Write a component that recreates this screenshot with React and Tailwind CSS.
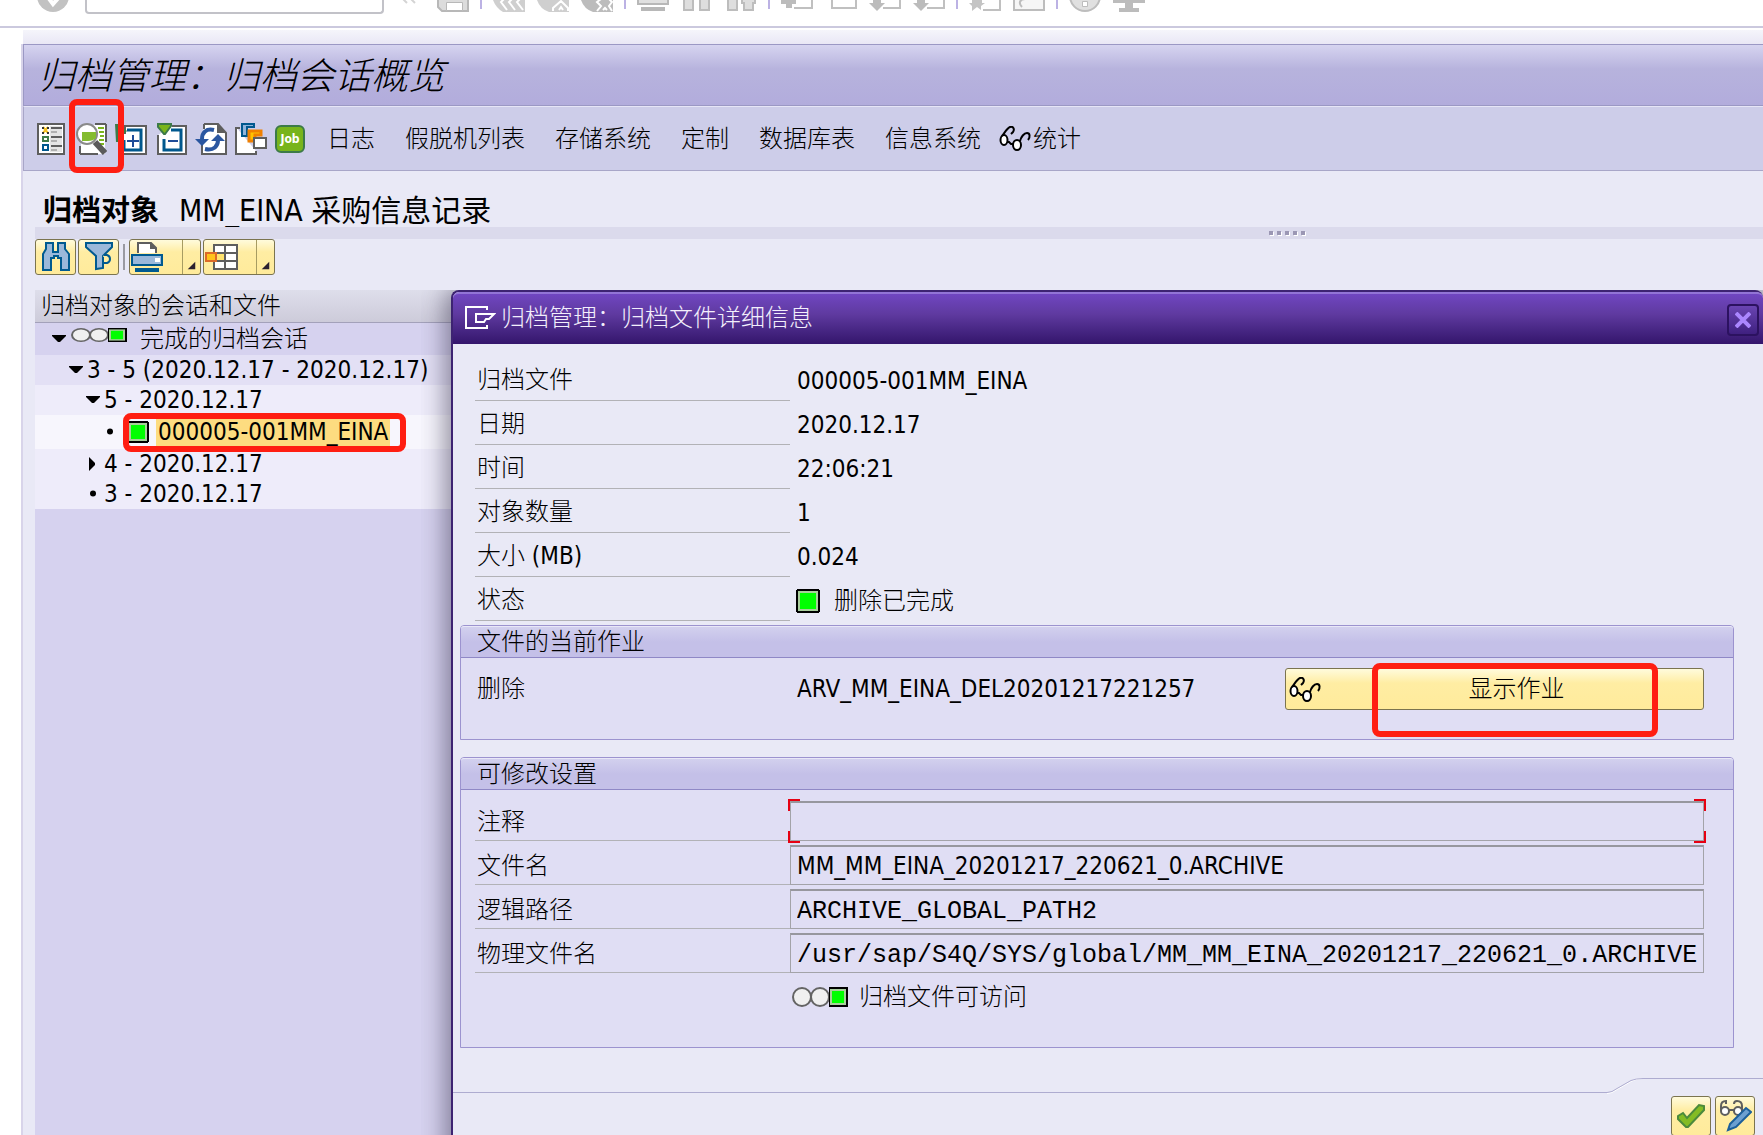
import React from 'react';
import clsx from 'clsx';

const YELLOW =
  'border border-[#7b744f] rounded-[3px] bg-linear-to-b from-[#fffbdc] via-[#ffeda3] via-35% to-[#ffeb9b]';

/* ---------- status lights ---------- */

const GreenSquare = ({ className }) => (
  <svg viewBox="0 0 24 24" className={clsx('shrink-0', className)} shapeRendering="crispEdges">
    <path fill="#000" d="M1 0h22v1h1v22h-1v1H1v-1H0V1h1z" />
    <path fill="#a9cf9c" d="M2 2h20v20H2z" />
    <path fill="#00ff00" d="M4 4h16v16H4z" />
  </svg>
);

const TrafficLight = ({ className }) => (
  <svg viewBox="0 0 56 20" preserveAspectRatio="none" className={clsx('shrink-0', className)}>
    <ellipse cx="10" cy="10" rx="9" ry="9" fill="#f0f0f0" stroke="#646464" strokeWidth="2" />
    <ellipse cx="28" cy="10" rx="9" ry="9" fill="#f0f0f0" stroke="#646464" strokeWidth="2" />
    <path fill="#000" d="M37 0h19v20H37z" />
    <path fill="#a9cf9c" d="M38 2h16v16H38z" />
    <path fill="#00ff00" d="M40 4h12v12H40z" />
  </svg>
);

const Glasses = () => (
  <svg viewBox="0 0 32 26" className="w-8 h-[26px] shrink-0" fill="none" stroke="#000" strokeWidth="2">
    <ellipse cx="5" cy="14" rx="3.5" ry="5" fill="#fff" />
    <ellipse cx="18" cy="19" rx="4" ry="5" fill="#fff" />
    <path d="M8 16h2l2 2h2" />
    <path d="M3 10C5 8 8 2 11 1c3-1 5 2 3 5l-2 2" />
    <path d="M21 15c1-4 4-8 7-8 3 0 3.500 4 1 7" />
  </svg>
);

/* ---------- system bar, only the lower part of each icon is on screen ---------- */

const SYS_ICONS = {
  save: (
    <>
      <path fill="#dcdcdc" stroke="#b8b8b8" strokeWidth="2" d="M1-2v9l4 4h26V-2" />
      <path fill="#fff" stroke="#b8b8b8" d="M9.500 2.500h16v8h-16z" />
    </>
  ),
  back: (
    <>
      <path fill="#cfcfcf" d="M0 0h32v12H10Q3 8 0 0z" />
      <path fill="none" stroke="#fff" strokeWidth="2" d="M12-2l-4 4 6 8M20-2l-4 4 6 8M28-2l-4 4 6 8" />
    </>
  ),
  exit: (
    <>
      <path fill="#cfcfcf" d="M0 0h32v12H12Q3 9 0 0z" />
      <path fill="none" stroke="#fff" strokeWidth="2" d="M16 11v-3l8-7 7 7v3M22 10l2-3 2 3" />
    </>
  ),
  cancel: (
    <>
      <path fill="#bcbcbc" d="M0 0h32v12H12Q3 9 0 0z" />
      <path fill="none" stroke="#fff" strokeWidth="2" d="M16 11l4-5-4-4 4-3M31 11l-3-5 3-4-3-3M22 10l2-2 2 2" />
    </>
  ),
  print: (
    <>
      <path fill="#e0e0e0" stroke="#b8b8b8" strokeWidth="2" d="M1-2v6h30v-6" />
      <path fill="#b8b8b8" d="M4 7h24v4H4z" />
    </>
  ),
  find: <path fill="#dedede" stroke="#bdbdbd" strokeWidth="2" d="M3-2h9v12H3zM19-2h9v12h-9z" />,
  findNext: (
    <path fill="#dedede" stroke="#bdbdbd" strokeWidth="2" d="M3-2h9v12H3zM19 3h-2v-5h13v5h-2v7h-9z" />
  ),
  first: (
    <>
      <path fill="none" stroke="#c0c0c0" strokeWidth="2" d="M13 8h18V-2" />
      <path fill="#bcbcbc" d="M0 0h15v4h-4v4H5V4H0z" />
    </>
  ),
  prev: <path fill="none" stroke="#c0c0c0" strokeWidth="2" d="M7-2v10h24V-2" />,
  next: (
    <>
      <path fill="none" stroke="#c0c0c0" strokeWidth="2" d="M14 8h17V-2" />
      <path fill="#bcbcbc" d="M4 0h8v3h4L8 11 0 3h4z" />
    </>
  ),
  session: (
    <>
      <path fill="none" stroke="#c0c0c0" strokeWidth="2" d="M14 10h17V-2" />
      <path fill="#c4c4c4" d="M3 0h10v3h3l-4 3v4L8 7l-5 4V6L0 3h3z" />
    </>
  ),
  shortcut: (
    <>
      <path fill="#f6f6f6" stroke="#bdbdbd" strokeWidth="2" d="M1-2v12h30V-2" />
      <path fill="none" stroke="#bdbdbd" strokeWidth="2" d="M9 7c-4-4-2-8 3-8" />
    </>
  ),
  help: (
    <>
      <circle cx="16" cy="-4" r="15" fill="#e0e0e0" stroke="#bdbdbd" strokeWidth="2" />
      <path fill="#fff" stroke="#bdbdbd" d="M13.500 1.500h5v5h-5z" />
    </>
  ),
  layout: <path fill="#bcbcbc" d="M0 0h32v3H20v5h6v4H6V8h6V3H0z" />,
};

const SYS_GROUPS = [
  [['save', '保存']],
  [['back', '返回'], ['exit', '退出'], ['cancel', '取消']],
  [['print', '打印'], ['find', '查找'], ['findNext', '查找下一个']],
  [['first', '第一页'], ['prev', '上一页'], ['next', '下一页'], ['next', '最后一页']],
  [['session', '新建会话'], ['shortcut', '创建快捷方式']],
  [['help', '帮助'], ['layout', '自定义布局']],
];

const SystemBar = () => (
  <div className="h-7 shrink-0 flex items-start bg-white border-b-2 border-[#cbc9de]">
    <button className="ml-[37px] w-8 h-3" title="回车" disabled>
      <svg viewBox="0 0 32 12" className="w-8 h-3">
        <circle cx="16" cy="-4" r="16" fill="#c2c2c2" />
        <path d="M10-4l6 8 8-9" fill="none" stroke="#fff" strokeWidth="4" />
      </svg>
    </button>
    <input
      aria-label="命令"
      className="ml-4 w-[299px] h-[14px] bg-white border-2 border-t-0 border-[#c2c2c8] rounded-b-sm outline-none"
    />
    <svg viewBox="0 0 16 4" className="ml-[18px] mr-[19px] w-4 h-1" stroke="#d4d4d4" strokeWidth="2">
      <path d="M1-1l4 4M9-1l4 4" />
    </svg>
    <div className="flex gap-3">
      {SYS_GROUPS.map((group, i) => (
        <React.Fragment key={i}>
          {i > 0 && <span className="w-0.5 h-[9px] -mx-px bg-[#bcb2e4]" />}
          {group.map(([icon, title], j) => (
            <button key={j} title={title} className="w-8 h-3" disabled>
              <svg viewBox="0 0 32 12" className="w-8 h-3">
                {SYS_ICONS[icon]}
              </svg>
            </button>
          ))}
        </React.Fragment>
      ))}
    </div>
  </div>
);

/* ---------- application toolbar ---------- */

const APP_ICONS = [
  {
    title: '选择',
    art: (
      <>
        <path fill="#fff" stroke="#5e5e5e" strokeWidth="2" d="M3 1h26v30H3z" />
        <path fill="#e4e4e4" d="M15 3h12v26H15z" />
        <path stroke="#5e5e5e" strokeWidth="2" d="M16 5h11M16 14h11M16 23h11" />
        <path stroke="#b0b0b0" strokeWidth="2" d="M16 9h6M16 18h6M16 27h6" />
        <path stroke="#f4c020" strokeWidth="2" d="M8 4l5 6M13 4l-5 6" />
        <path fill="#333" d="M7 4h2v2H7zM12 4h2v2h-2zM7 9h2v2H7zM12 9h2v2h-2z" />
        <path fill="none" stroke="#3c7a48" strokeWidth="2" d="M8 14h5v4H8z" />
        <path fill="none" stroke="#00588e" strokeWidth="2" d="M8 22h5v5H8z" />
      </>
    ),
  },
  {
    title: '显示细节',
    marked: true,
    art: (
      <>
        <path fill="#fff" d="M6 2h24v29H6z" />
        <path stroke="#5e5e5e" strokeWidth="2" d="M31 1v18M20 1h11M5 31h18M5 23v8" />
        <path stroke="#7ab51d" strokeWidth="2" d="M23 5h6M24 9h5M25 13h4M24 17h5M23 21h6" />
        <circle cx="12" cy="11" r="10" fill="#fff" stroke="#8a8a8a" strokeWidth="2" />
        <path fill="#84bc30" d="M7 9h14v6q-3 3-8 3H7z" />
        <path stroke="#5a5a5a" strokeWidth="6" d="M20 19l10 11" />
      </>
    ),
  },
  {
    title: '展开',
    art: (
      <>
        <path fill="#fff" stroke="#5e5e5e" strokeWidth="2" d="M31 3v28H4V10h6V3z" />
        <path fill="#3c7a48" d="M0 1h5l7 7-7 7v4H1z" />
        <path fill="none" stroke="#00588e" strokeWidth="3" d="M12 7h14v20H9V17" />
        <path stroke="#1e4c98" strokeWidth="2" d="M12 18h12M18 12v12" />
      </>
    ),
  },
  {
    title: '压缩',
    art: (
      <>
        <path fill="#fff" stroke="#5e5e5e" strokeWidth="2" d="M17 3h14v28H3V12" />
        <path fill="#7ab51d" stroke="#3c7a48" strokeWidth="2" d="M3 1h13v2l-6 8h-1L3 4z" />
        <path fill="none" stroke="#00588e" strokeWidth="3" d="M16 7h10v20H9V16" />
        <path stroke="#1e4c98" strokeWidth="2" d="M13 18h10" />
      </>
    ),
  },
  {
    title: '刷新',
    art: (
      <>
        <path fill="#fff" stroke="#5e5e5e" strokeWidth="2" d="M9 1h14l8 9v21H7V22M9 1v5" />
        <path fill="#5e5e5e" d="M22 1l9 9h-9z" />
        <path fill="none" stroke="#2a56a0" strokeWidth="4" d="M19 7c-8-2-12 3-12 9M10 26c9 2 13-3 13-9" />
        <path fill="#2a56a0" d="M0 16h14l-7 7zM16 18h14l-7-7z" />
      </>
    ),
  },
  {
    title: '存储对象',
    art: (
      <>
        <path fill="#fff" stroke="#5e5e5e" strokeWidth="2" d="M1 4v27h20v-3M1 5h4" />
        <path fill="#8fb4dc" stroke="#00588e" strokeWidth="2" d="M7 13V1h12v3h-7v9z" />
        <path fill="#ffc400" stroke="#f08000" strokeWidth="3" d="M14 18V8h12v4h-6v6z" />
        <path fill="#fff" stroke="#5e5e5e" strokeWidth="2" d="M19 15h12v10H19z" />
      </>
    ),
  },
];

const TEXT_ACTIONS = ['日志', '假脱机列表', '存储系统', '定制', '数据库表', '信息系统'];

const AppToolbar = () => (
  <div className="h-[65px] shrink-0 flex items-center pl-[11px] border-t border-b border-l border-t-[#e6e5f6] border-b-[#a8a6c8] border-l-[#a8a6c8] bg-[#cdcde9]">
    <div className="flex gap-2">
      {APP_ICONS.map(({ title, art, marked }) => (
        <button key={title} title={title} className="relative w-8 h-8">
          <svg viewBox="0 0 32 32" className="w-8 h-8" fill="none">
            {art}
          </svg>
          {marked && (
            <span className="absolute z-10 -left-[6px] -top-[24px] w-[55px] h-[74px] border-6 border-[#ff1e12] rounded-lg pointer-events-none" />
          )}
        </button>
      ))}
      <button
        title="作业"
        className="mt-0.5 w-[30px] h-7 rounded-md border-2 border-[#3c7a48] bg-[#78b41c] text-white text-[12px] leading-[22px] font-bold font-['DejaVu_Sans_Condensed',sans-serif]"
      >
        Job
      </button>
    </div>
    <div className="ml-[22px] flex gap-[30px] text-2xl">
      {TEXT_ACTIONS.map((label) => (
        <button key={label}>{label}</button>
      ))}
    </div>
    <button className="ml-[18px] flex items-center gap-0.5 text-2xl">
      <Glasses />
      统计
    </button>
  </div>
);

/* ---------- list toolbar + tree ---------- */

const DropCorner = () => (
  <svg viewBox="0 0 18 34" className="w-[18px] h-[34px] border-l border-[#a79c62]">
    <path d="M13 22v8H5z" fill="#2b2030" />
  </svg>
);

const ListToolbar = () => (
  <div className="h-9 shrink-0 flex items-center gap-0.5">
    <button title="查找" className={`${YELLOW} w-[41px] h-9 flex items-center justify-center`}>
      <svg viewBox="0 0 30 32" className="w-[30px] h-8" fill="#9ab8da" stroke="#005a90" strokeWidth="2">
        <path d="M2 13l3-5V2h7v9h5V2h7v6l4 5v16h-8V17h-3v-2h-4v2h-3v12H2z" />
      </svg>
    </button>
    <button title="过滤" className={`${YELLOW} w-[41px] h-9 flex items-center justify-center`}>
      <svg viewBox="0 0 30 32" className="w-[30px] h-8" fill="#9ab8da" stroke="#005a90" strokeWidth="2">
        <path d="M2 2h26v4l-9 9v12l-7 1V15L2 6z" />
        <path fill="#ffeda3" d="M19 16v6h4q3-1 3-4t-3-4h-3" />
      </svg>
    </button>
    <span className="mx-0.5 w-0.5 h-[26px] bg-[#9a9aa2]" />
    <button title="打印" className={`${YELLOW} w-[72px] h-9 flex items-center justify-between`}>
      <svg viewBox="0 0 34 32" className="w-[34px] h-8" strokeWidth="2">
        <path fill="#fff" stroke="#5e5e5e" d="M8 12V2h13l5 5v5" />
        <path fill="#5e5e5e" d="M20 1l7 7h-7z" />
        <path fill="#9ab8da" stroke="#005a90" d="M2 14h30v10H2z" />
        <path fill="#fff" d="M25 17h5v4h-5z" />
        <path fill="#005a90" d="M5 27h24v4H5z" />
      </svg>
      <DropCorner />
    </button>
    <button title="格式" className={`${YELLOW} w-[72px] h-9 flex items-center justify-between`}>
      <svg viewBox="0 0 34 32" className="w-[34px] h-8" strokeWidth="2">
        <path fill="#fff" stroke="#5e5e5e" d="M10 4h23v24H10zM10 12h23M10 20h23M21 4v24" />
        <path fill="#ffe36e" d="M12 13h8v6h-8z" />
        <path fill="#ffc21a" stroke="#dc6a28" d="M2 12h10v8H2z" />
      </svg>
      <DropCorner />
    </button>
  </div>
);

const Arrow = ({ kind }) => (
  <svg viewBox="0 0 14 14" className="w-[14px] h-[14px] shrink-0">
    {kind === 'open' && <path d="M0 3h14v1l-6 6H6L0 4z" />}
    {kind === 'closed' && <path d="M3 0l6 6v2l-6 6z" />}
    {kind === 'leaf' && <circle cx="7" cy="6.500" r="3" />}
  </svg>
);

const LATIN = "text-[24px] font-['DejaVu_Sans_Condensed','Noto_Sans_CJK_SC',sans-serif]";

const TREE_ROWS = [
  { kind: 'open', text: '3 - 5 (2020.12.17 - 2020.12.17)', row: 'h-[30px] pl-[34px] bg-[#e3e0f5]' },
  { kind: 'open', text: '5 - 2020.12.17', row: 'h-[30px] pl-[51px] bg-[#eeecfa]' },
  { kind: 'leaf', text: '000005-001MM_EINA', row: 'h-[34px] pl-[68px] bg-[#f7f6fd]', selected: true },
  { kind: 'closed', text: '4 - 2020.12.17', row: 'h-[30px] pl-[51px] bg-[#eeecfa]' },
  { kind: 'leaf', text: '3 - 2020.12.17', row: 'h-[30px] pl-[51px] bg-[#eeecfa]' },
];

const SessionTree = () => (
  <div className="mt-[15px] grow flex flex-col bg-[#d6d2ef]">
    <div className="h-[33px] shrink-0 flex items-center pl-[6px] text-2xl border-b border-[#a3a1ba] bg-linear-to-b from-[#dedeeb] to-[#cdcbda]">
      归档对象的会话和文件
    </div>
    <div className="h-[32px] shrink-0 flex items-center pl-[17px] text-2xl">
      <Arrow kind="open" />
      <TrafficLight className="ml-[5px] mr-[13px] mb-2 w-14 h-[14px]" />
      完成的归档会话
    </div>
    {TREE_ROWS.map(({ kind, text, row, selected }) => (
      <div key={text} className={clsx('shrink-0 flex items-center', LATIN, row)}>
        <Arrow kind={kind} />
        {selected ? (
          <div className="relative ml-[10px] flex items-center">
            <GreenSquare className="w-[22px] h-[22px]" />
            <span className="ml-[7px] pl-0.5 pr-0.5 leading-[30px] bg-[#fddc80]">{text}</span>
            <span className="absolute -left-[4px] -right-[16px] -top-[4px] -bottom-[5px] border-6 border-[#ff1e12] rounded-lg pointer-events-none" />
          </div>
        ) : (
          <span className="ml-1">{text}</span>
        )}
      </div>
    ))}
  </div>
);

/* ---------- detail dialog ---------- */

const DETAILS = [
  ['归档文件', '000005-001MM_EINA'],
  ['日期', '2020.12.17'],
  ['时间', '22:06:21'],
  ['对象数量', '1'],
  ['大小 (MB)', '0.024'],
];

const LABEL = 'w-[315px] shrink-0 pl-[2px] text-2xl border-b border-[#b2b2b6]';

const Group = ({ title, className, children }) => (
  <section className={clsx('ml-[7px] mr-[29px] border border-[#9c93cf] rounded-t-[4px] bg-[#e0def4]', className)}>
    <h2 className="h-8 pl-4 text-2xl leading-[30px] border-b border-[#8f88c6] border-t border-t-[#e9e7f8] rounded-t-[3px] bg-linear-to-b from-[#d2d0ee] via-[#c4c0e8] via-50% to-[#c4c0e8]">
      {title}
    </h2>
    {children}
  </section>
);

const FIELD =
  'w-full h-10 pl-[6px] bg-transparent border border-[#a3a3a8] border-t-2 border-t-[#97979e] outline-none';

const FIELDS = [
  { id: 'note', label: '注释', value: '', font: '', required: true },
  { id: 'file', label: '文件名', value: 'MM_MM_EINA_20201217_220621_0.ARCHIVE', font: LATIN },
  {
    id: 'logical',
    label: '逻辑路径',
    value: 'ARCHIVE_GLOBAL_PATH2',
    font: "pt-1 text-[25px] font-['Liberation_Mono',monospace]",
  },
  {
    id: 'physical',
    label: '物理文件名',
    value: '/usr/sap/S4Q/SYS/global/MM_MM_EINA_20201217_220621_0.ARCHIVE',
    font: "pt-1 text-[25px] font-['Liberation_Mono',monospace]",
  },
];

const RequiredCorners = () => (
  <>
    <span className="absolute -left-0.5 -top-0.5 w-3 h-3 border-l-2 border-t-2 border-[#e60012]" />
    <span className="absolute -right-0.5 -top-0.5 w-3 h-3 border-r-2 border-t-2 border-[#e60012]" />
    <span className="absolute -left-0.5 -bottom-0.5 w-3 h-3 border-l-2 border-b-2 border-[#e60012]" />
    <span className="absolute -right-0.5 -bottom-0.5 w-3 h-3 border-r-2 border-b-2 border-[#e60012]" />
  </>
);

const DetailDialog = () => (
  <div
    role="dialog"
    aria-labelledby="dialog-title"
    className="absolute z-20 left-[451px] right-0 top-[290px] min-h-full rounded-t-lg border-2 border-r-0 border-[#3d2372] bg-[#e9e9f6] shadow-[0_4px_24px_6px_rgba(60,55,80,0.55)] [clip-path:inset(0_0_0_-30px)]"
  >
    <div className="h-[52px] flex items-center pl-[11px] pr-1 rounded-t-md border-t-2 border-[#9274d6] bg-linear-to-b from-[#7046c1] via-[#5f3aa0] via-40% to-[#34156c]">
      <svg viewBox="0 0 32 26" className="w-8 h-[26px] mb-0.5" fill="none" stroke="#fff" strokeWidth="2">
        <path d="M23 5V2H2v21h21v-3" />
        <path d="M12 9h18l-5 5h-3l-2 3h-8z" />
      </svg>
      <h1 id="dialog-title" className="ml-[5px] mb-0.5 text-2xl text-[#f3effc]">
        归档管理：归档文件详细信息
      </h1>
      <button
        title="关闭"
        className="ml-auto mt-0.5 w-8 h-8 flex items-center justify-center rounded-sm border-2 border-[#2c1260] bg-linear-to-b from-[#6a44b2] to-[#3f2080]"
      >
        <svg viewBox="0 0 16 16" className="w-4 h-4" stroke="#ab87ff" strokeWidth="4">
          <path d="M1 1l14 14M15 1L1 15" />
        </svg>
      </button>
    </div>

    <div className="pt-[13px]">
      <dl>
        {DETAILS.map(([label, value]) => (
          <div key={label} className="h-11 pl-[22px] flex items-stretch">
            <dt className={clsx(LABEL, 'leading-[46px]')}>{label}</dt>
            <dd className={clsx('ml-[7px] leading-[48px]', LATIN)}>{value}</dd>
          </div>
        ))}
        <div className="h-11 pl-[22px] flex items-stretch">
          <dt className={clsx(LABEL, 'leading-[46px]')}>状态</dt>
          <dd className="ml-[6px] pt-1 flex items-center gap-[14px] text-2xl">
            <GreenSquare className="w-6 h-6" />
            删除已完成
          </dd>
        </div>
      </dl>

      <Group title="文件的当前作业" className="mt-1 h-[115px]">
        <div className="pt-[10px] pl-4 pr-[29px] flex items-center">
          <span className="w-[320px] shrink-0 text-2xl">删除</span>
          <span className={LATIN}>ARV_MM_EINA_DEL20201217221257</span>
          <button
            className={`${YELLOW} relative ml-auto w-[419px] h-[42px] flex items-center justify-center text-2xl`}
          >
            <span className="absolute left-[3px] top-2">
              <Glasses />
            </span>
            <span className="ml-11">显示作业</span>
            <span className="absolute left-[86px] -top-[6px] w-[286px] h-[74px] border-6 border-[#ff1e12] rounded-lg pointer-events-none" />
          </button>
        </div>
      </Group>

      <Group title="可修改设置" className="mt-[17px] h-[291px]">
        <div className="pt-[11px] pl-[14px] pr-[29px] flex flex-col gap-1">
          {FIELDS.map(({ id, label, value, font, required }) => (
            <div key={id} className="h-10 flex">
              <label htmlFor={id} className={clsx(LABEL, 'leading-[42px]')}>
                {label}
              </label>
              <div className="relative grow">
                <input id={id} defaultValue={value} className={clsx(FIELD, font)} />
                {required && <RequiredCorners />}
              </div>
            </div>
          ))}
          <div className="h-10 pl-[317px] flex items-center gap-[11px] text-2xl">
            <TrafficLight className="w-14 h-5" />
            归档文件可访问
          </div>
        </div>
      </Group>
    </div>

    <div className="mt-[30px] flex">
      <div className="mt-[14px] grow border-t border-[#aeacd0]" />
      <svg viewBox="0 0 36 16" className="w-9 h-4 shrink-0" fill="none">
        <path d="M0 15.500q5 0 10-4L24 3.500Q29 .500 36 .500" stroke="#fff" />
        <path d="M0 14.500q5 0 10-4L24 2.500Q29 .500 36 .500" stroke="#aeacd0" />
      </svg>
      <div className="w-[120px] shrink-0 border-t border-[#aeacd0]" />
    </div>
    <div className="mt-0.5 pr-2 flex justify-end gap-1">
      <button title="继续" className={`${YELLOW} w-10 h-10 flex items-center justify-center`}>
        <svg viewBox="0 0 28 26" className="w-7 h-[26px]">
          <path d="M1 13l5-3 4 5L22 2l5 1v4L11 24H9L1 16z" fill="#84bc24" stroke="#4c8a3c" strokeWidth="2" />
        </svg>
      </button>
      <button title="显示/更改" className={`${YELLOW} w-10 h-10 flex items-center justify-center`}>
        <svg viewBox="0 0 34 34" className="w-[34px] h-[34px]" fill="none" strokeWidth="2">
          <path stroke="#5e5e5e" d="M3 12V7q0-5 5-5v3M24 12V7q0-5-5-5-3 0-3 3M11 11h5" />
          <circle cx="7" cy="12" r="4" fill="#fff" stroke="#5e5e5e" />
          <circle cx="20" cy="12" r="4" fill="#fff" stroke="#5e5e5e" />
          <path d="M12 25L28 9l5 4-15 15-8 3z" fill="#6c9fd0" stroke="#1c5f9a" />
        </svg>
      </button>
    </div>
  </div>
);

export default function App() {
  return (
    <div className="relative h-screen overflow-hidden flex flex-col bg-white text-black font-light font-['DejaVu_Sans_Condensed','Noto_Sans_CJK_SC',sans-serif]">
      <SystemBar />
      <div className="h-[14px] shrink-0 mt-0.5 ml-[23px] bg-linear-to-b from-[#f5f5fb] to-[#e9e7f5]" />
      <main className="grow min-h-0 flex flex-col ml-[21px] border-l-2 border-[#d8d4ea] bg-[#e9e9f6]">
        <div className="h-[62px] shrink-0 flex items-center pt-0.5 pl-[14px] border-t border-b border-l border-[#9b98c4] bg-linear-to-b from-[#d6d4f0] via-[#b7b3dd] via-40% to-[#b2acdc]">
          <h1 className="text-[37px] leading-none italic">归档管理：归档会话概览</h1>
        </div>
        <AppToolbar />
        <div className="h-14 shrink-0 pt-6 pl-5 flex items-center gap-5 leading-8">
          <span className="text-[29px] font-bold">归档对象</span>
          <span className="text-[30px] font-normal">MM_EINA 采购信息记录</span>
        </div>
        <div className="grow min-h-0 pl-3 flex flex-col">
          <div className="h-3 shrink-0 flex items-center justify-end pr-[458px] gap-1 bg-[#dbdaec]">
            {[0, 1, 2, 3, 4].map((i) => (
              <span key={i} className="w-1 h-1 bg-[#9b97b4] shadow-[1px_1px_0_#fff]" />
            ))}
          </div>
          <ListToolbar />
          <SessionTree />
        </div>
      </main>
      <DetailDialog />
    </div>
  );
}
